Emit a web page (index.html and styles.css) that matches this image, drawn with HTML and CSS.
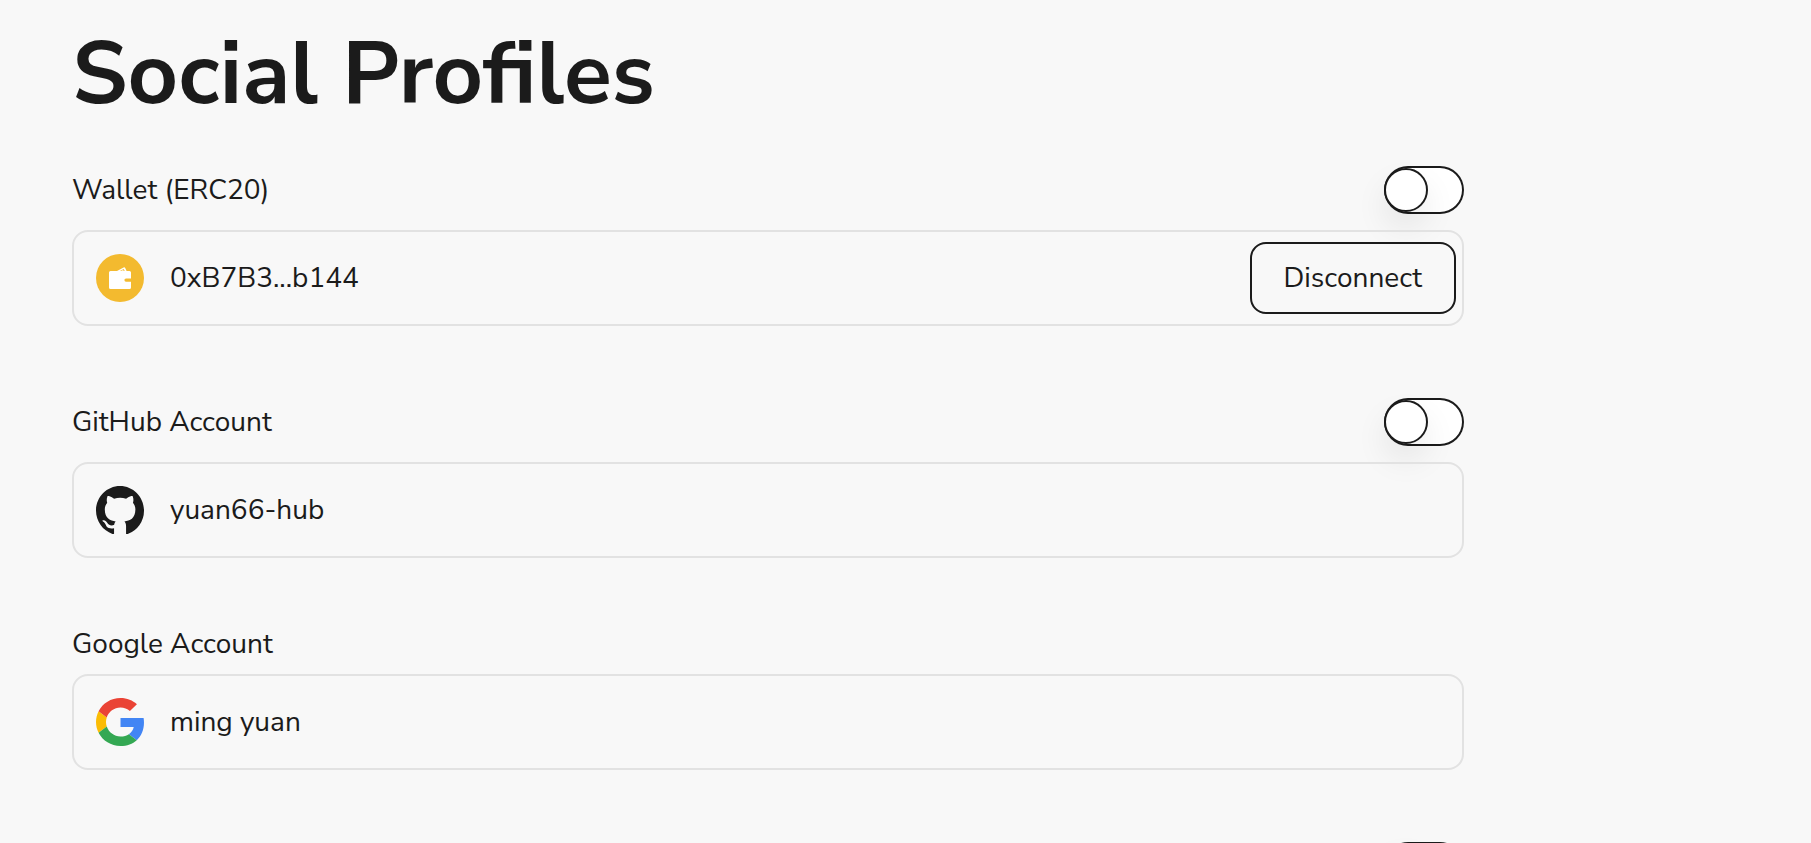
FILE: index.html
```html
<!DOCTYPE html>
<html lang="en">
<head>
<meta charset="utf-8">
<title>Social Profiles</title>
<link rel="stylesheet" href="styles.css">
</head>
<body>
<main class="profiles">
  <h1 class="title">Social Profiles</h1>

  <section class="group">
    <div class="head">
      <label class="label" for="wallet">Wallet (ERC20)</label>
      <input class="toggle" type="checkbox" role="switch" aria-label="Show wallet">
    </div>
    <div class="field">
      <svg class="icon" viewBox="0 0 48 48" aria-hidden="true">
        <circle cx="24" cy="24" r="24" fill="#f3ba2f"/>
        <path fill="#fff" fill-rule="evenodd" d="M14.500 17H21l6.600-3.600a1.200 1.200 0 0 1 1.600.500l1.400 3.100H33.500a1.500 1.500 0 0 1 1.500 1.500v6h-5a1.600 1.600 0 0 0 0 3.200h5v5.800a1.500 1.500 0 0 1-1.500 1.500h-19a1.500 1.500 0 0 1-1.500-1.500v-15a1.500 1.500 0 0 1 1.500-1.500zm9.500 0h1.200l1.900-1.100.600 1.100h1l-1-2z"/>
      </svg>
      <input class="value" id="wallet" type="text" value="0xB7B3...b144" readonly>
      <button class="button" type="button">Disconnect</button>
    </div>
  </section>

  <section class="group">
    <div class="head">
      <label class="label" for="github">GitHub Account</label>
      <input class="toggle" type="checkbox" role="switch" aria-label="Show GitHub account">
    </div>
    <div class="field">
      <svg class="icon" viewBox="0 0 16 15.610" preserveAspectRatio="none" aria-hidden="true">
        <path fill="#1b1b1b" d="M8 0C3.580 0 0 3.580 0 8c0 3.540 2.290 6.530 5.470 7.590.200.035.400.010.550-.070V13.720c-2.010.370-2.530-.490-2.690-.940-.090-.230-.480-.940-.820-1.130-.280-.150-.680-.520-.010-.530.630-.010 1.080.580 1.230.820.720 1.210 1.870.870 2.330.660.070-.520.280-.870.510-1.070-1.780-.200-3.640-.890-3.640-3.950 0-.870.310-1.590.820-2.150-.080-.200-.360-1.020.080-2.120 0 0 .670-.210 2.200.820.640-.180 1.320-.270 2-.270s1.360.090 2 .270c1.530-1.040 2.200-.820 2.200-.820.440 1.100.160 1.920.080 2.120.510.560.820 1.270.820 2.150 0 3.070-1.870 3.750-3.650 3.950.290.250.540.730.540 1.480v2.580c.150.080.350.080.550.020A8.010 8.010 0 0 0 16 8c0-4.420-3.580-8-8-8z"/>
      </svg>
      <input class="value" id="github" type="text" value="yuan66-hub" readonly>
    </div>
  </section>

  <section class="group">
    <div class="head">
      <label class="label" for="google">Google Account</label>
    </div>
    <div class="field">
      <svg class="icon" viewBox="0 0 47 48" preserveAspectRatio="none" aria-hidden="true">
        <path fill="#4285f4" d="M46.980 24.550c0-1.570-.150-3.090-.380-4.550H24v9.020h12.940c-.580 2.960-2.260 5.480-4.780 7.180l7.730 6c4.510-4.180 7.090-10.360 7.090-17.650z"/>
        <path fill="#fbbc05" d="M10.530 28.590c-.480-1.450-.760-2.990-.760-4.590s.270-3.140.760-4.590l-7.980-6.190C.920 16.460 0 20.120 0 24c0 3.880.920 7.540 2.560 10.780z"/>
        <path fill="#ea4335" d="M24 9.500c3.540 0 6.710 1.220 9.210 3.600l6.850-6.850C35.900 2.380 30.470 0 24 0 14.620 0 6.510 5.380 2.560 13.220l7.980 6.190C12.430 13.720 17.740 9.500 24 9.500z"/>
        <path fill="#34a853" d="M24 48c6.480 0 11.930-2.130 15.890-5.810l-7.730-6c-2.150 1.450-4.920 2.300-8.160 2.300-6.260 0-11.570-4.220-13.470-9.910l-7.980 6.190C6.510 42.620 14.620 48 24 48z"/>
      </svg>
      <input class="value" id="google" type="text" value="ming yuan" readonly>
    </div>
  </section>

  <section class="group">
    <div class="head head-end">
      <input class="toggle" type="checkbox" role="switch" aria-label="Show account">
    </div>
  </section>
</main>
</body>
</html>
```
FILE: styles.css
```css
*,
*::before {
  box-sizing: border-box;
}

body {
  margin: 0;
  height: 100vh;
  overflow: hidden;
  background: #f8f8f8;
  color: #1b1b1b;
  font-family: "Nunito Sans", Nunito, "Open Sans", sans-serif;
  font-size: 28px;
}

.profiles {
  display: flex;
  flex-direction: column;
  gap: 72px;
  padding: 26px 347px 0 72px;
}

.title {
  margin: 0 0 -28px;
  font-size: 88px;
  font-weight: 700;
  line-height: 96px;
}

.group {
  display: flex;
  flex-direction: column;
  gap: 16px;
}

.head {
  display: flex;
  align-items: center;
  justify-content: space-between;
}

.head-end {
  justify-content: flex-end;
}

.label {
  line-height: 28px;
}

.toggle {
  appearance: none;
  display: flex;
  align-items: center;
  flex: none;
  width: 80px;
  height: 48px;
  margin: 0;
  border-radius: 24px;
  background: #fff;
  box-shadow: inset 0 0 0 2px #1b1b1b;
}

.toggle::before {
  content: "";
  width: 44px;
  height: 44px;
  border: 2px solid #1b1b1b;
  border-radius: 50%;
  background: #fff;
  box-shadow: 0 16px 32px rgba(0, 0, 0, 0.08);
}

.toggle:checked {
  justify-content: flex-end;
}

.field {
  display: flex;
  align-items: center;
  gap: 26px;
  height: 96px;
  padding: 0 6px 0 22px;
  border: 2px solid #e2e2e2;
  border-radius: 16px;
}

.icon {
  flex: none;
  width: 48px;
  height: 48px;
}

.value {
  flex: 1;
  min-width: 0;
  padding: 0;
  border: 0;
  outline: 0;
  background: transparent;
  color: inherit;
  font: inherit;
}

.button {
  height: 72px;
  padding: 0 32px;
  border: 2px solid #1b1b1b;
  border-radius: 16px;
  background: transparent;
  color: inherit;
  font: inherit;
}
```
